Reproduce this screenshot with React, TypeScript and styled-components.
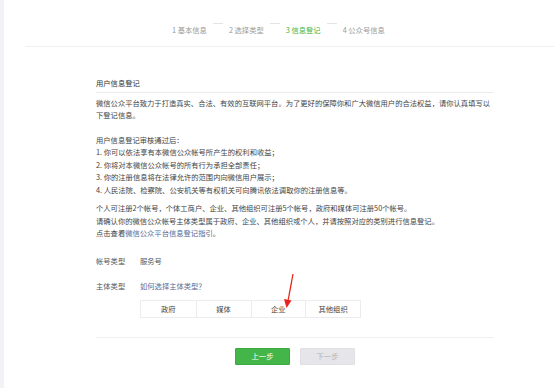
import React from 'react';
import styled, { createGlobalStyle } from 'styled-components';

const GlobalStyle = createGlobalStyle`
  html, body {
    margin: 0;
    padding: 0;
    background: #fff;
  }
  body {
    font-family: "Noto Sans CJK SC", "Noto Sans", sans-serif;
    font-size: 7.3px;
    color: #444;
  }
`;

const Page = styled.div`
  display: flex;
  width: 554px;
  height: 388px;
  overflow: hidden;
`;

const SideEdge = styled.div`
  width: 4px;
  flex: none;
  background: #f2f3f7;
`;

const Main = styled.div`
  flex: 1;
  margin-left: 21px;
  position: relative;
`;

const StepBar = styled.div`
  height: 47px;
  box-sizing: border-box;
  border-bottom: 1px solid #f0f0f2;
  display: flex;
  align-items: flex-end;
  padding-left: 147px;
  padding-bottom: 10px;
  gap: 5px;
`;

const Step = styled.span<{ active?: boolean }>`
  color: ${({ active }) => (active ? '#44b549' : '#9a9a9a')};
  white-space: nowrap;
  line-height: 12px;
`;

const StepDash = styled.span`
  align-self: center;
  width: 10px;
  height: 1px;
  background: #e4e4e4;
  margin: 10px 1px 0;
`;

const Content = styled.div`
  width: 398px;
  margin-left: 71px;
  padding-top: 30px;
`;

const Title = styled.div`
  color: #333;
  line-height: 12.5px;
  padding-bottom: 2px;
  border-bottom: 1px solid #ececef;
`;

const Para = styled.p<{ gap?: number }>`
  margin: ${({ gap }) => gap ?? 0}px 0 0;
  line-height: 12.5px;
  color: #444;
`;

const Link = styled.a`
  color: #576b95;
  text-decoration: none;
`;

const FormRow = styled.div<{ gap: number }>`
  display: flex;
  margin-top: ${({ gap }) => gap}px;
  line-height: 12.5px;
`;

const Label = styled.span`
  width: 44px;
  color: #555;
`;

const Value = styled.span`
  color: #555;
`;

const TypeGrid = styled.div`
  display: grid;
  grid-template-columns: repeat(4, 1fr);
  width: 219px;
  margin: 7px 0 0 44px;
  border: 1px solid #ececef;
`;

const TypeCell = styled.div`
  height: 16px;
  line-height: 16px;
  text-align: center;
  color: #444;
  & + & {
    border-left: 1px solid #ececef;
  }
`;

const Footer = styled.div`
  margin-top: 19px;
  border-top: 1px solid #f0f0f2;
  padding-top: 10px;
  display: flex;
  justify-content: center;
  gap: 10px;
`;

const Button = styled.button<{ primary?: boolean }>`
  width: 55px;
  height: 17px;
  padding: 0;
  border-radius: 1px;
  font-family: inherit;
  font-size: 7.3px;
  border: 1px solid ${({ primary }) => (primary ? '#3ea843' : '#e0e0e4')};
  background: ${({ primary }) => (primary ? '#44b549' : '#e6e6ea')};
  color: ${({ primary }) => (primary ? '#fff' : '#b4b4b8')};
`;

const Arrow = styled.svg`
  position: absolute;
  left: 255px;
  top: 273px;
  width: 16px;
  height: 38px;
`;

const steps = ['1 基本信息', '2 选择类型', '3 信息登记', '4 公众号信息'];
const types = ['政府', '媒体', '企业', '其他组织'];

export default function App() {
  return (
    <>
      <GlobalStyle />
      <Page>
        <SideEdge />
        <Main>
          <StepBar>
            {steps.map((s, i) => (
              <React.Fragment key={s}>
                {i > 0 && <StepDash />}
                <Step active={i === 2}>{s}</Step>
              </React.Fragment>
            ))}
          </StepBar>
          <Content>
            <Title>用户信息登记</Title>
            <Para gap={4}>
              微信公众平台致力于打造真实、合法、有效的互联网平台。为了更好的保障你和广大微信用户的合法权益，请你认真填写以下登记信息。
            </Para>
            <Para gap={12}>
              用户信息登记审核通过后：
              <br />
              1. 你可以依法享有本微信公众帐号所产生的权利和收益；
              <br />
              2. 你将对本微信公众帐号的所有行为承担全部责任；
              <br />
              3. 你的注册信息将在法律允许的范围内向微信用户展示；
              <br />
              4. 人民法院、检察院、公安机关等有权机关可向腾讯依法调取你的注册信息等。
            </Para>
            <Para gap={6}>
              个人可注册2个帐号，个体工商户、企业、其他组织可注册5个帐号，政府和媒体可注册50个帐号。
              <br />
              请确认你的微信公众帐号主体类型属于政府、企业、其他组织或个人，并请按照对应的类别进行信息登记。
              <br />
              点击查看<Link>微信公众平台信息登记指引</Link>。
            </Para>
            <FormRow gap={15}>
              <Label>帐号类型</Label>
              <Value>服务号</Value>
            </FormRow>
            <FormRow gap={13}>
              <Label>主体类型</Label>
              <Link>如何选择主体类型？</Link>
            </FormRow>
            <TypeGrid>
              {types.map((t) => (
                <TypeCell key={t}>{t}</TypeCell>
              ))}
            </TypeGrid>
            <Footer>
              <Button primary>上一步</Button>
              <Button>下一步</Button>
            </Footer>
          </Content>
          <Arrow viewBox="0 0 16 38">
            <line x1="13" y1="1" x2="8" y2="28" stroke="#e8231b" strokeWidth="1.3" />
            <polygon points="4,26 11.5,27.5 6.5,35" fill="#e8231b" />
          </Arrow>
        </Main>
      </Page>
    </>
  );
}
